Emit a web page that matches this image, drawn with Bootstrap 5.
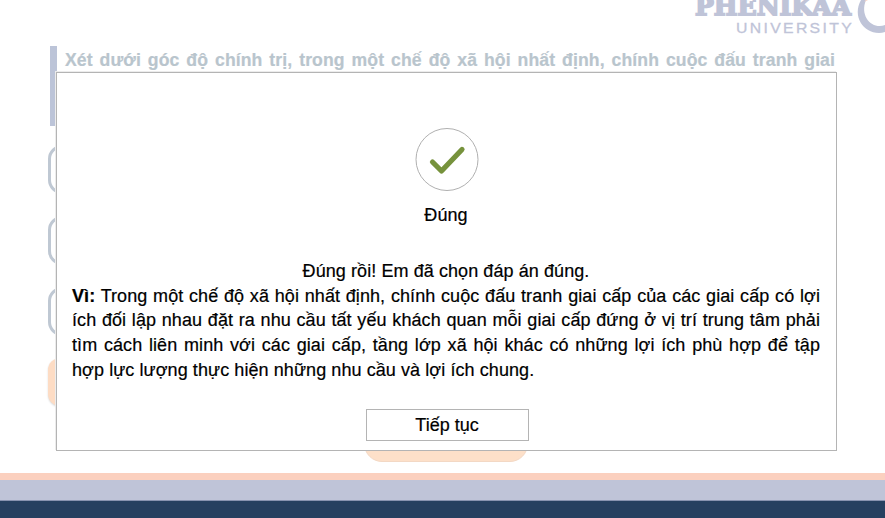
<!DOCTYPE html>
<html lang="vi">
<head>
<meta charset="utf-8">
<meta name="viewport" content="width=device-width, initial-scale=1">
<title>Phenikaa University</title>
<link href="https://cdn.jsdelivr.net/npm/bootstrap@5.3.0/dist/css/bootstrap.min.css" rel="stylesheet">
<style>
body{width:885px;height:518px;font-family:"Liberation Sans",Arial,sans-serif;color:#000}
.slide{height:518px}
.brand-logo{width:200px;height:46px}
.question{height:80px;margin-left:50px;width:787px;border-left:7px solid #bcc4d8;padding:2px 2px 0 8px;color:#b9c5cd;font-size:17.6px;line-height:24px;letter-spacing:.1px;-webkit-text-stroke:.2px #b9c5cd}
.spread{text-align:justify;text-align-last:justify;white-space:nowrap}
.answers{margin:19px 0 0 48px;width:788px;gap:22px}
.answer{height:49px;border:3px solid #bfc8d3;border-radius:14px}
.result{height:48px;margin-top:0;border-radius:12px;background:#fddcc4;box-shadow:0 1px 2px #d8d8d8}
.submit{width:164px;height:48px;border-radius:18px;left:364px;top:414px;background:#fde0c9;border:1px solid #f3d8c4}
.stripe-peach{height:7px;background:#fbd0bf}
.stripe-lilac{height:21px;background:#bfc4d8;border-bottom:1px solid #8893b0}
.stripe-navy{height:17px;background:#264060}
.feedback{left:56px;top:72px;width:781px;height:379px;border:1px solid #b4b4b4;box-shadow:-1px -1px 0 #ececec;padding:54px 16px 0 15px;font-size:18px;line-height:24.7px;letter-spacing:.08px;-webkit-text-stroke:.2px #000}
.tick{width:64px;height:64px;margin-left:2px}
.verdict{margin-top:12px;line-height:25px}
.explain{margin-top:31px}
.continue-btn{width:163px;height:32px;margin:26px 0 0 2px;padding:5px 0;border:1px solid #b4b4b4;border-radius:0;background:#fff;font-size:18px;line-height:20px;color:#000}
</style>
</head>
<body class="bg-white overflow-hidden">
<main class="slide position-relative d-flex flex-column overflow-hidden">
  <header class="d-flex justify-content-end">
    <svg class="brand-logo" viewBox="0 0 200 46" fill="#bfc4d8">
      <text x="10" y="14.500" font-family="DejaVu Serif" font-weight="700" font-size="25" textLength="156" lengthAdjust="spacingAndGlyphs" stroke="#bfc4d8" stroke-width="1.800">PHENIKAA</text>
      <text x="51" y="33" font-family="Liberation Sans" font-size="15.500" textLength="118" lengthAdjust="spacingAndGlyphs" letter-spacing="2.300" stroke="#bfc4d8" stroke-width=".3">UNIVERSITY</text>
      <path d="M176 0C167 16 178 33 194 33Q197 33 200 32V25C188 30 174 17 181 0Z"/>
      <path d="M179 2l2-2h2z" fill="#fbd0bf"/>
    </svg>
  </header>
  <section class="question fw-bold"><div class="spread">Xét dưới góc độ chính trị, trong một chế độ xã hội nhất định, chính cuộc đấu tranh giai</div></section>
  <section class="answers d-flex flex-column">
    <div class="answer"></div><div class="answer"></div><div class="answer"></div>
    <div class="result"></div>
  </section>
  <div class="submit position-absolute"></div>
  <footer class="mt-auto"><div class="stripe-peach"></div><div class="stripe-lilac"></div><div class="stripe-navy"></div></footer>
  <section class="feedback position-absolute bg-white d-flex flex-column align-items-center" role="dialog">
    <svg class="tick" viewBox="0 0 64 64" fill="none"><circle cx="32" cy="32.500" r="31" stroke="#b0b0b0"/><path d="M17.500 35L26.500 44L47 22.500" stroke="#76923c" stroke-width="5.200" stroke-linecap="round" stroke-linejoin="round"/></svg>
    <div class="verdict">Đúng</div>
    <div class="explain w-100">
      <div class="text-center">Đúng rồi! Em đã chọn đáp án đúng.</div>
      <div class="spread"><b>Vì:</b> Trong một chế độ xã hội nhất định, chính cuộc đấu tranh giai cấp của các giai cấp có lợi</div>
      <div class="spread">ích đối lập nhau đặt ra nhu cầu tất yếu khách quan mỗi giai cấp đứng ở vị trí trung tâm phải</div>
      <div class="spread">tìm cách liên minh với các giai cấp, tầng lớp xã hội khác có những lợi ích phù hợp để tập</div>
      <div>hợp lực lượng thực hiện những nhu cầu và lợi ích chung.</div>
    </div>
    <button class="btn continue-btn" type="button">Tiếp tục</button>
  </section>
</main>
<script src="https://cdn.jsdelivr.net/npm/bootstrap@5.3.0/dist/js/bootstrap.bundle.min.js"></script>
</body>
</html>
